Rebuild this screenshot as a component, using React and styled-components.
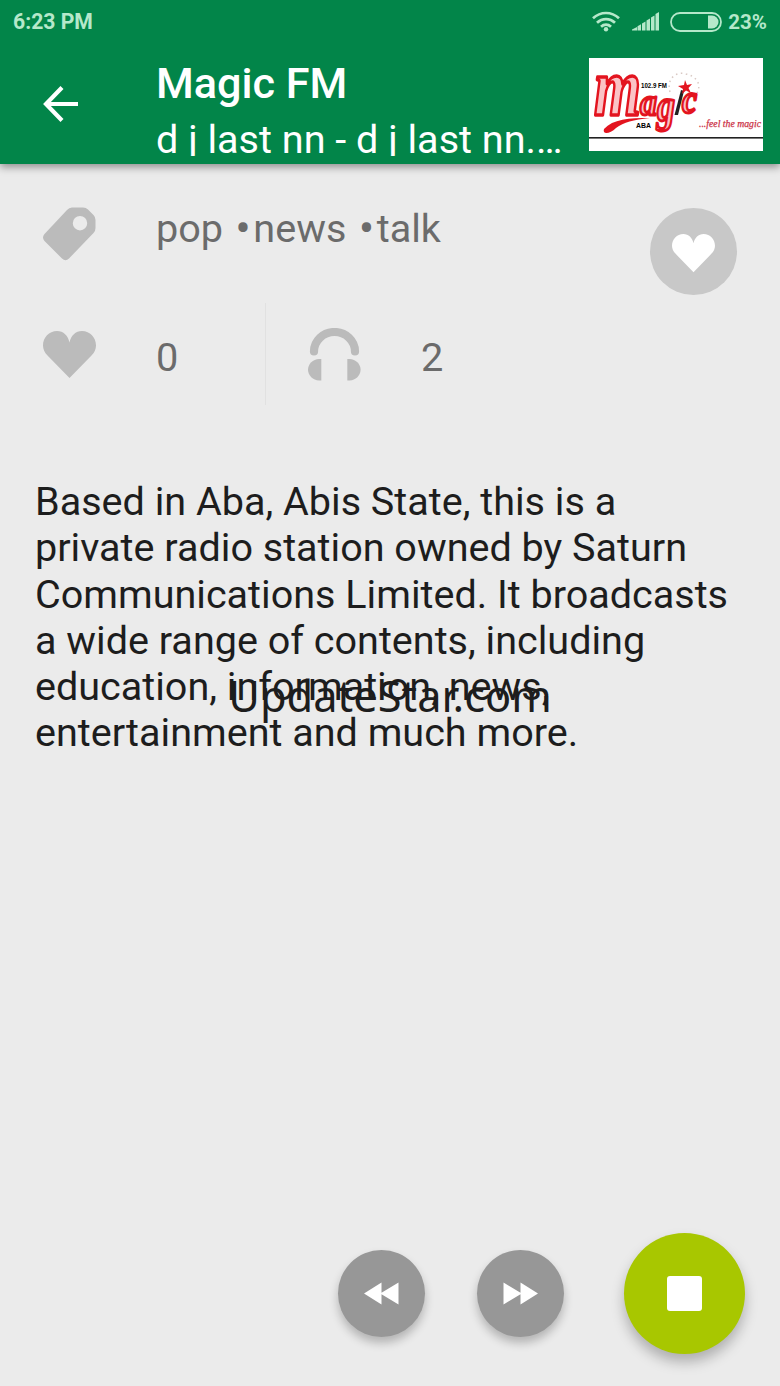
import React from "react";
import styled, { createGlobalStyle } from "styled-components";

const STATION = {
	name: "Magic FM",
	track: "d j last nn - d j last nn.…",
	genres: ["pop", "news", "talk"],
	likes: 0,
	listeners: 2,
};

const DESCRIPTION = [
	"Based in Aba, Abis State, this is a",
	"private radio station owned by Saturn",
	"Communications Limited. It broadcasts",
	"a wide range of contents, including",
	"education, information, news,",
	"entertainment and much more.",
];

const HeartIcon = ({ width }) => (
	<svg width={width} height={(width * 47) / 53} viewBox="0 0 53 47" fill="currentColor">
		<path d="M26.5 47L4.5 24.5C1.5 21.5 0 18 0 14.5C0 6.5 6 0 14 0C20.5 0 25 4.5 26.5 11.5C28 4.5 32.5 0 39 0C47 0 53 6.5 53 14.5C53 18 51.5 21.5 48.5 24.5Z" />
	</svg>
);

const TagIcon = () => (
	<svg width="53" height="54" viewBox="0 0 53 54" fill="currentColor">
		<path
			fillRule="evenodd"
			d="M29 .5H40Q43 .5 45 2.5L50.5 8Q52.5 10 52.5 13V21Q52.5 24 50.5 26L26 51.5Q22.5 55 19 51.5L1.5 34Q-1.5 30.5 1.5 27L24 3Q26 .5 29 .5ZM37 9A7.2 7.2 0 1 0 37 23.4A7.2 7.2 0 1 0 37 9Z"
		/>
	</svg>
);

const HeadphonesIcon = () => (
	<svg width="53" height="53" viewBox="0 0 53 53" fill="currentColor">
		<path
			d="M6 23.5A20.5 19.5 0 0 1 47 23.5"
			fill="none"
			stroke="currentColor"
			strokeWidth="8.2"
			strokeLinecap="round"
		/>
		<path d="M13.3 31V52.5H11C5 52 0 47.5 0 41.7S5 31.4 11 31Z" />
		<path d="M39.3 31V52.5H41.6C47.6 52 52.6 47.5 52.6 41.7S47.6 31.4 41.6 31Z" />
	</svg>
);

const BackIcon = () => (
	<svg width="36" height="36" viewBox="0 0 36 36" fill="none" stroke="#fff" strokeWidth="4.2">
		<path d="M35 18H4M19 1.5L3 18L19 34.5" />
	</svg>
);

const WifiIcon = () => (
	<svg width="28" height="21" viewBox="0 0 28 21" fill="none" stroke="currentColor" strokeWidth="2.7">
		<path d="M1 7.3C8.5 .2 19.5 .2 27 7.3M5 11.8C10.2 6.8 17.8 6.8 23 11.8M9 15.8C12 13 16 13 19 15.8" />
		<circle cx="14" cy="18.3" r="2.2" fill="currentColor" stroke="none" />
	</svg>
);

const SignalIcon = () => (
	<svg width="27" height="19" viewBox="0 0 27 19" fill="currentColor">
		<path d="M0 18.5V17.5L5 15V18.5ZM5.5 18.5V14.3L9 12.3V18.5ZM10 18.5V11.5L13.5 9.5V18.5ZM14.5 18.5V8.5L18 6.5V18.5ZM19 18.5V5.5L22.5 3.5V18.5ZM23.5 18.5V2L27 0V18.5Z" />
	</svg>
);

const BatteryIcon = () => (
	<svg width="52" height="20" viewBox="0 0 52 20">
		<rect x="1" y="1" width="50" height="18" rx="9" fill="none" stroke="currentColor" strokeWidth="1.8" />
		<path d="M38 3.5H42A6.5 6.5 0 0 1 42 16.5H38Z" fill="currentColor" />
	</svg>
);

const RewindIcon = ({ flip }) => (
	<svg width="36" height="23" viewBox="0 0 36 23" fill="#fff">
		<path
			transform={flip ? "matrix(-1 0 0 1 35 0)" : undefined}
			d="M0 11.5L17.5 .5V10.8L34.5 .5V22.5L17.5 12.2V22.5Z"
		/>
	</svg>
);

const StationLogo = () => (
	<svg width="174" height="93" viewBox="0 0 174 93">
		<g
			fontFamily="'Liberation Serif', serif"
			fontStyle="italic"
			fontWeight="700"
			fill="#fbc3c6"
			stroke="#e3141f"
			strokeWidth="3.3"
			strokeLinejoin="round"
		>
			<text x="5" y="57" fontSize="82" textLength="47" lengthAdjust="spacingAndGlyphs">m</text>
			<text x="51" y="57" fontSize="38" strokeWidth="2.8" textLength="17" lengthAdjust="spacingAndGlyphs">a</text>
			<text x="68" y="63" fontSize="46" strokeWidth="2.8" textLength="18" lengthAdjust="spacingAndGlyphs">g</text>
			<text x="93" y="55" fontSize="42" strokeWidth="2.8" textLength="15" lengthAdjust="spacingAndGlyphs">c</text>
		</g>
		<path d="M15 71C24 61 40 60 61 60C44 62 35 64 27 70C21 76 13 77 15 71Z" fill="#e3141f" />
		<path d="M85.5 57L92 32L95 33L89 57Z" fill="#222" />
		<path d="M96 22L98 27L103 26L99.5 30L102 35L97 32.5L93 36L94 31L89 28L95 27Z" fill="#e3141f" />
		<path
			d="M81 34C77 20 88 13 97 16C107 18 113 26 108 35"
			fill="none"
			stroke="#d9c9c4"
			strokeWidth="1.5"
			strokeDasharray="1.5 3.5"
		/>
		<g fontFamily="'Liberation Sans', sans-serif" fontWeight="700">
			<text x="52" y="30" fontSize="8" textLength="26" lengthAdjust="spacingAndGlyphs">102.9 FM</text>
			<text x="47" y="70" fontSize="8" textLength="15" lengthAdjust="spacingAndGlyphs">ABA</text>
		</g>
		<text
			x="110"
			y="69"
			fontFamily="'Liberation Serif', serif"
			fontSize="10.5"
			fontStyle="italic"
			fill="#cb3045"
			stroke="#cb3045"
			strokeWidth=".25"
			textLength="62"
			lengthAdjust="spacingAndGlyphs"
		>
			...feel the magic
		</text>
		<rect y="79" width="174" height="1.6" fill="#222" />
	</svg>
);

const App = () => {
	return (
		<Screen>
			<GlobalStyle />
			<Header>
				<StatusBar>
					<Clock>6:23 PM</Clock>
					<StatusIcons>
						<WifiIcon />
						<SignalIcon />
						<BatteryIcon />
						<BatteryLevel>23%</BatteryLevel>
					</StatusIcons>
				</StatusBar>
				<Toolbar>
					<BackButton aria-label="Back">
						<BackIcon />
					</BackButton>
					<Titles>
						<Title>{STATION.name}</Title>
						<Track>{STATION.track}</Track>
					</Titles>
					<LogoFrame>
						<StationLogo />
					</LogoFrame>
				</Toolbar>
			</Header>

			<Info>
				<GenreRow>
					<TagIcon />
					<Genres>
						{STATION.genres.map((genre, index) => (
							<React.Fragment key={genre}>
								{index > 0 && (
									<>
										{" "}
										<Bullet>•</Bullet>
									</>
								)}
								{genre}
							</React.Fragment>
						))}
					</Genres>
					<FavoriteButton aria-label="Favorite">
						<HeartIcon width={43} />
					</FavoriteButton>
				</GenreRow>
				<StatsRow>
					<Stat>
						<HeartIcon width={53} />
						<StatValue>{STATION.likes}</StatValue>
					</Stat>
					<Stat>
						<HeadphonesIcon />
						<StatValue>{STATION.listeners}</StatValue>
					</Stat>
				</StatsRow>
			</Info>

			<Description>
				{DESCRIPTION.map((line) => (
					<Line key={line}>{line}</Line>
				))}
				<Watermark>UpdateStar.com</Watermark>
			</Description>

			<Player>
				<SkipButton aria-label="Previous">
					<RewindIcon />
				</SkipButton>
				<SkipButton aria-label="Next">
					<RewindIcon flip />
				</SkipButton>
				<StopButton aria-label="Stop">
					<StopSquare />
				</StopButton>
			</Player>
		</Screen>
	);
};

const GlobalStyle = createGlobalStyle`
	*, *::before, *::after {
		box-sizing: border-box;
	}

	body {
		margin: 0;
		background: #ebebeb;
		font-family: Roboto, sans-serif;
	}

	svg {
		display: block;
		flex-shrink: 0;
	}
`;

const Screen = styled.main`
	display: flex;
	flex-direction: column;
	width: 780px;
	height: 1386px;
	overflow: hidden;
	background: #ebebeb;
`;

const Header = styled.header`
	flex-shrink: 0;
	height: 164px;
	background: #028549;
	box-shadow: 0 3px 8px rgba(0, 0, 0, 0.4);
`;

const StatusBar = styled.div`
	display: flex;
	justify-content: space-between;
	align-items: center;
	height: 43px;
	padding: 0 13px;
	color: #b5e8ca;
	font-size: 20.5px;
	font-weight: 700;
`;

const Clock = styled.span`
	font-size: 21.2px;
`;

const StatusIcons = styled.div`
	display: flex;
	align-items: center;
	gap: 11px;

	& > :first-child {
		margin-right: 1px;
	}
`;

const BatteryLevel = styled.span`
	margin-left: -5px;
`;

const Toolbar = styled.div`
	display: flex;
	height: 121px;
	padding: 0 17px 0 43px;
	color: #fff;
`;

const Button = styled.button`
	display: flex;
	justify-content: center;
	align-items: center;
	flex-shrink: 0;
	border: 0;
	padding: 0;
	color: #fff;
`;

const BackButton = styled(Button)`
	width: 36px;
	height: 121px;
	background: none;
`;

const Titles = styled.div`
	flex: 1;
	padding: 15px 0 0 77px;
	white-space: nowrap;
`;

const Title = styled.h1`
	margin: 0;
	font-size: 43.2px;
	font-weight: 500;
	line-height: 51px;
`;

const Track = styled.p`
	height: 47px;
	margin: 0;
	overflow: hidden;
	font-size: 39.6px;
	line-height: 62px;
`;

const LogoFrame = styled.div`
	width: 174px;
	height: 93px;
	margin-top: 15px;
	background: #fff;
`;

const Info = styled.section`
	padding: 43px 43px 0;
	color: #bbb;
`;

const GenreRow = styled.div`
	display: flex;
	align-items: flex-start;
	height: 96px;
`;

const Genres = styled.span`
	flex: 1;
	margin-left: 60px;
	color: #6b6b6b;
	font-size: 39.6px;
	line-height: 44px;
	white-space: pre;
`;

const Bullet = styled.span`
	display: inline-block;
	width: 20.5px;
	font-size: 46px;
	line-height: 36px;
	text-align: center;
	vertical-align: -2px;
`;

const FavoriteButton = styled(Button)`
	width: 87px;
	height: 87px;
	margin-top: 1px;
	border-radius: 50%;
	padding-top: 4px;
	background: #c8c8c8;
`;

const StatsRow = styled.div`
	display: flex;
	height: 102px;
`;

const Stat = styled.div`
	display: flex;
	align-items: center;
	width: 222px;
	padding-top: 1px;

	& + & {
		border-left: 1px solid #e1e1e1;
		padding-left: 42px;
	}
`;

const StatValue = styled.span`
	margin: 7px 0 0 60px;
	color: #6b6b6b;
	font-size: 39.7px;
	line-height: 46px;
`;

const Description = styled.section`
	position: relative;
	margin-top: 74px;
	padding-left: 35px;
	color: #1d1d1d;
	font-size: 39.55px;
	line-height: 46.3px;
	white-space: nowrap;
`;

const Line = styled.div``;

const Watermark = styled.div`
	position: absolute;
	top: 194px;
	left: 0;
	width: 780px;
	font-family: "Noto Sans", sans-serif;
	font-size: 43.4px;
	line-height: 46px;
	text-align: center;
`;

const Player = styled.footer`
	display: flex;
	justify-content: flex-end;
	align-items: center;
	margin-top: auto;
	padding: 0 35px 32px 0;
`;

const SkipButton = styled(Button)`
	width: 87px;
	height: 87px;
	margin-right: 52px;
	border-radius: 50%;
	background: #979797;
	box-shadow: 0 6px 10px rgba(0, 0, 0, 0.24);
`;

const StopButton = styled(Button)`
	width: 121px;
	height: 121px;
	margin-left: 8px;
	border-radius: 50%;
	background: #a8c700;
	box-shadow: 0 8px 13px rgba(0, 0, 0, 0.26);
`;

const StopSquare = styled.span`
	width: 35px;
	height: 35px;
	border-radius: 3px;
	background: #fff;
`;

export default App;
